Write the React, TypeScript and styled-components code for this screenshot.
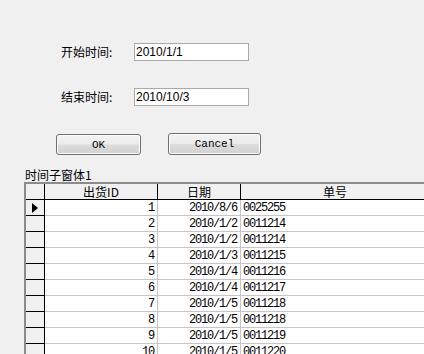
import React from 'react';
import styled, { createGlobalStyle } from 'styled-components';

const GlobalStyle = createGlobalStyle`
  html, body {
    margin: 0;
    padding: 0;
    background: #f0f0f0;
  }
  * {
    box-sizing: border-box;
  }
`;

const rows = [
  { id: 1, date: '2010/8/6', no: '0025255' },
  { id: 2, date: '2010/1/2', no: '0011214' },
  { id: 3, date: '2010/1/2', no: '0011214' },
  { id: 4, date: '2010/1/3', no: '0011215' },
  { id: 5, date: '2010/1/4', no: '0011216' },
  { id: 6, date: '2010/1/4', no: '0011217' },
  { id: 7, date: '2010/1/5', no: '0011218' },
  { id: 8, date: '2010/1/5', no: '0011218' },
  { id: 9, date: '2010/1/5', no: '0011219' },
  { id: 10, date: '2010/1/5', no: '0011220' },
];

const App = () => {
  return (
    <Page>
      <GlobalStyle />
      <Form>
        <Label>开始时间:</Label>
        <Field>2010/1/1</Field>
        <Label>结束时间:</Label>
        <Field>2010/10/3</Field>
      </Form>
      <Buttons>
        <Button $w={85} $h={21}>OK</Button>
        <Button $w={93} $h={22}>Cancel</Button>
      </Buttons>
      <Caption>时间子窗体1</Caption>
      <Grid>
        <Row>
          <Cell $kind="head" />
          <Cell $kind="head" $align="center">出货ID</Cell>
          <Cell $kind="head" $align="center">日期</Cell>
          <Cell $kind="head" $align="center">单号</Cell>
        </Row>
        {rows.map((r, i) => (
          <Row key={r.id}>
            <Cell $kind="sel" $align="center">
              {i === 0 && (
                <svg width="6" height="10" viewBox="0 0 6 10">
                  <polygon points="0,0 6,5 0,10" fill="#000" />
                </svg>
              )}
            </Cell>
            <Cell $kind="data" $align="right">{r.id}</Cell>
            <Cell $kind="data" $align="right">{r.date}</Cell>
            <Cell $kind="data" $align="left">{r.no}</Cell>
          </Row>
        ))}
      </Grid>
    </Page>
  );
};

const Page = styled.div`
  width: 424px;
  height: 354px;
  overflow: hidden;
  background: #f0f0f0;
  display: flex;
  flex-direction: column;
`;

const Form = styled.div`
  display: grid;
  grid-template-columns: 73px 115px;
  row-gap: 27px;
  align-items: center;
  padding: 43px 0 0 61px;
`;

const Label = styled.div`
  font-family: 'Noto Sans CJK SC', 'Liberation Sans', sans-serif;
  font-size: 12px;
  line-height: 14px;
  color: #000;
`;

const Field = styled.div`
  height: 18px;
  background: #fff;
  border: 1px solid #a9a9a9;
  padding: 0 1px;
  font-family: 'Liberation Sans', sans-serif;
  font-size: 12px;
  line-height: 16px;
  color: #000;
`;

const Buttons = styled.div`
  display: flex;
  align-items: flex-end;
  gap: 27px;
  margin-top: 27px;
  padding-left: 56px;
`;

const Button = styled.button<{ $w: number; $h: number }>`
  width: ${(p) => p.$w}px;
  height: ${(p) => p.$h}px;
  padding: 0;
  border: 1px solid #707070;
  border-radius: 3px;
  background: linear-gradient(#f3f3f3 0%, #ececec 48%, #dddddd 52%, #d0d0d0 100%);
  box-shadow: inset 0 0 0 1px #fcfcfc;
  font-family: 'Liberation Mono', monospace;
  font-size: 11px;
  color: #000;
`;

const Caption = styled.div`
  margin-top: 13px;
  padding-left: 25px;
  height: 14px;
  font-family: 'Noto Sans CJK SC', 'Liberation Sans', sans-serif;
  font-size: 12px;
  line-height: 14px;
  color: #000;
`;

const Grid = styled.div`
  margin-left: 24px;
  width: 406px;
  flex-shrink: 0;
  border-top: 2px solid #8c8c8c;
  border-left: 2px solid #8c8c8c;
`;

const Row = styled.div`
  display: grid;
  grid-template-columns: 19px 113px 83px 1fr;
  height: 16px;
`;

const Cell = styled.div<{ $kind: 'head' | 'sel' | 'data'; $align?: string }>`
  height: 16px;
  display: flex;
  align-items: center;
  justify-content: ${(p) =>
    p.$align === 'right' ? 'flex-end' : p.$align === 'center' ? 'center' : 'flex-start'};
  padding: ${(p) => (p.$kind === 'data' && p.$align === 'right' ? '0 3px 0 2px' : '0 2px')};
  overflow: hidden;
  white-space: nowrap;
  color: #000;
  background: ${(p) => (p.$kind === 'data' ? '#fff' : '#f0f0f0')};
  border-right: 1px solid ${(p) => (p.$kind === 'data' ? '#c6c6c6' : '#000')};
  border-bottom: 1px solid ${(p) => (p.$kind === 'data' ? '#c6c6c6' : '#000')};
  font-family: ${(p) =>
    p.$kind === 'head'
      ? "'Noto Sans CJK SC', 'Liberation Sans', sans-serif"
      : "'Liberation Mono', monospace"};
  font-size: 12px;
  letter-spacing: ${(p) => (p.$kind === 'data' ? '-1.2px' : '0')};
`;

export default App;
